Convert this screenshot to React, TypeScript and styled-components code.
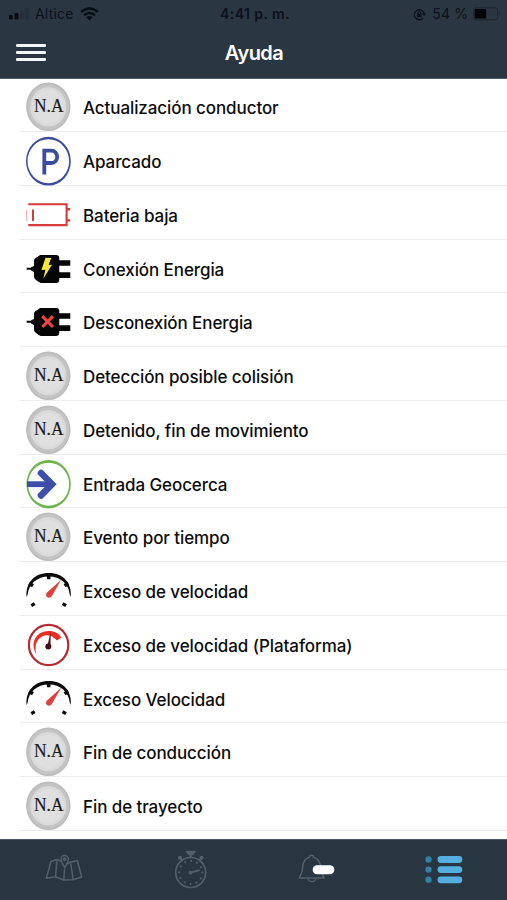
import React from "react";
import styled, { createGlobalStyle } from "styled-components";

const Global = createGlobalStyle`
  * { box-sizing: border-box; }
  body { margin: 0; background: #fff; }
`;

const Screen = styled.div`
  width: 507px;
  height: 900px;
  display: flex;
  flex-direction: column;
  overflow: hidden;
  background: #fff;
  color: #0c0c0c;
  font-family: Inter, "Liberation Sans", sans-serif;
`;

const Header = styled.header`
  flex: 0 0 79px;
  background: #2a3642;
  border-bottom: 1px solid #53606b;
`;

const StatusBar = styled.div`
  height: 27px;
  padding: 1px 6px 0 9px;
  display: grid;
  grid-template-columns: 1fr auto 1fr;
  align-items: center;
  font-size: 14px;
  line-height: 26px;
  color: #0b121b;
`;

const StatusGroup = styled.div<{ $end?: boolean }>`
  display: flex;
  align-items: center;
  justify-content: ${(p) => (p.$end ? "flex-end" : "flex-start")};
`;

const Carrier = styled.span`
  margin: 0 6px 0 5px;
  letter-spacing: 0.2px;
`;

const Clock = styled.span`
  font-weight: 600;
  letter-spacing: 0.45px;
`;

const Percent = styled.span`
  margin: 0 5px 0 6px;
  letter-spacing: 0.1px;
`;

const NavBar = styled.div`
  height: 51px;
  padding: 0 16px;
  display: grid;
  grid-template-columns: 30px 1fr 30px;
  align-items: center;
`;

const MenuButton = styled.button`
  display: flex;
  flex-direction: column;
  gap: 4.5px;
  width: 30px;
  padding: 0;
  border: 0;
  background: none;
`;

const MenuLine = styled.span`
  height: 2.8px;
  border-radius: 1px;
  background: #f4f7f9;
`;

const Title = styled.h1`
  margin: 0;
  padding-left: 1px;
  text-align: center;
  font-size: 20px;
  font-weight: 600;
  letter-spacing: -0.55px;
  color: #fff;
`;

const List = styled.ul`
  flex: 1;
  margin: 0;
  padding: 0 0 0 20px;
  list-style: none;
  overflow: hidden;
`;

const Row = styled.li`
  height: 53.75px;
  display: flex;
  align-items: flex-start;
  gap: 12px;
  padding: 4px 0 0 5px;
  border-bottom: 1.5px solid #ededee;

  &:first-child {
    height: 53px;
    padding-top: 3px;
  }
`;

const RowLabel = styled.span`
  padding-top: 13px;
  font-size: 17px;
  line-height: 26px;
  font-weight: 500;
  letter-spacing: -0.085px;
  white-space: nowrap;
`;

const RowIcon = styled.svg`
  flex: 0 0 46px;
  width: 46px;
  height: 50px;
  overflow: visible;
`;

const BadgeText = styled.text`
  font-family: "Liberation Serif", serif;
  font-size: 18px;
  fill: #1b1b1b;
  stroke: #1b1b1b;
  stroke-width: 0.2px;
`;

const TabBar = styled.nav`
  flex: 0 0 61px;
  display: grid;
  grid-template-columns: repeat(4, 1fr);
  background: #283641;
  border-top: 1px solid #4b5862;
`;

const Tab = styled.a<{ $active?: boolean }>`
  display: flex;
  justify-content: center;
  color: ${(p) => (p.$active ? "#52afe0" : "#50606c")};
`;

const TabIcon = styled.svg`
  width: 60px;
  height: 60px;
  fill: none;
  stroke: currentColor;
  stroke-width: 1.5;
  stroke-linejoin: round;
  stroke-linecap: round;
`;

const NaIcon = () => (
  <RowIcon viewBox="0 0 46 50">
    <ellipse cx="23.3" cy="24.8" rx="22.2" ry="24.3" fill="#bdbdbd" />
    <ellipse cx="23.3" cy="24.8" rx="20.6" ry="22.6" fill="#c4c4c4" />
    <ellipse cx="23.3" cy="24.8" rx="18" ry="19.8" fill="#dadada" />
    <ellipse cx="23.3" cy="24.8" rx="15.5" ry="17" fill="#dfdfdf" />
    <BadgeText x="9" y="30.2" textLength="29.5" lengthAdjust="spacingAndGlyphs">N.A</BadgeText>
  </RowIcon>
);

const ParkedIcon = () => (
  <RowIcon viewBox="0 0 46 50" fill="none" stroke="#3b4c9e">
    <path
      fill="#3b4c9e"
      stroke="none"
      fillRule="evenodd"
      d="M1 25.2a22.4 24.4 0 1 0 44.8 0a22.4 24.4 0 1 0-44.8 0ZM2.5 25.2a20.8 22 0 1 1 41.6 0a20.8 22 0 1 1-41.6 0Z"
    />
    <path d="M19.3 38.5V14.6H26.5a5.5 6 0 0 1 0 12.4H19.3" strokeWidth="3.8" />
  </RowIcon>
);

const BatteryIcon = () => (
  <RowIcon viewBox="0 0 46 50" fill="none" stroke="#d73b3a">
    <path d="M3.3 14.3H41.6V35.1H3.3" strokeWidth="2.1" />
    <path d="M42 19.2h3.2M42 30.4h3.2" strokeWidth="2.4" />
    <path d="M8 19.5v11.6" strokeWidth="2" />
    <path d="M1.6 20v11" strokeWidth="1.5" stroke="#efb9b9" />
  </RowIcon>
);

const PlugIcon = ({ connected }: { connected?: boolean }) => (
  <RowIcon viewBox="0 0 46 50">
    <path
      fill="#050505"
      d="M15 11H31Q34.3 11 34.3 14.2V16.3H45.3V21.7H34.3V28.3H45.3V33.9H34.3V35.4Q34.3 38.9 31 38.9H15.5C13 36.9 9.3 35.9 9 32.4V28Q8.5 27.1 6.8 26.9L5.8 25.8H1.7V23.8H5.8L6.8 22.8Q8.5 22.6 9 21.7V16.7C9.4 13.4 13 13.2 15 11Z"
    />
    {connected ? (
      <path fill="#f8e63a" d="M20.5 13.7L26.2 14L23.6 21L27 20.8L18.3 34.7L20.4 25.7L16.4 26Z" />
    ) : (
      <path d="M17.3 19.2L28 30M28 19.2L17.3 30" stroke="#ec463d" strokeWidth="3.1" fill="none" />
    )}
  </RowIcon>
);

const EntryIcon = () => (
  <RowIcon viewBox="0 0 46 50" fill="none">
    <path
      fill="#6db44a"
      fillRule="evenodd"
      d="M1.4 25.2a22.2 24.2 0 1 0 44.4 0a22.2 24.2 0 1 0-44.4 0ZM3 25.2a20.6 21.5 0 1 1 41.2 0a20.6 21.5 0 1 1-41.2 0Z"
    />
    <path d="M2 25.2H26" stroke="#3d4fa8" strokeWidth="5.8" />
    <path d="M16 14L27 25.2L16 36.4" stroke="#3d4fa8" strokeWidth="6.6" strokeLinecap="round" />
  </RowIcon>
);

const SpeedIcon = () => (
  <RowIcon viewBox="0 0 46 50">
    <path
      fill="#0b0b0b"
      d="M1.6 31C.3 17.5 9 7.1 23.8 7.1S47 17.5 45.8 31L44.7 28.5C43.7 18 35.5 10.5 23.8 10.5S3.7 18 2.7 28.5Z"
    />
    <path d="M23.7 9v4.2M4.2 17.4l3.8 2.3M43.3 17.4l-3.8 2.3" stroke="#0b0b0b" strokeWidth="3.6" />
    <path d="M36.2 13.8L26.6 30.5Q24.4 32.8 22 31.1Q20 28.5 22 26.4Z" fill="#df423e" />
    <path d="M6.3 39.7l3.4-2M41 39.7l-3.4-2" stroke="#0b0b0b" strokeWidth="3.2" />
  </RowIcon>
);

const PlatformSpeedIcon = () => (
  <RowIcon viewBox="0 0 46 50" fill="none">
    <ellipse cx="23.6" cy="25" rx="19.7" ry="20.1" stroke="#b52b30" strokeWidth="2.2" />
    <path
      fill="#e92d22"
      d="M11.5 35C6 26 8 15 18.5 11.8C25.5 9.4 33.5 12 36.3 17.5L32 20.5C27.5 15.5 22 14 17.5 16.3C10.7 19.8 9.3 27 11.5 35Z"
    />
    <path d="M25.8 11.5L25.4 28H21.8Z" fill="#50151c" />
    <circle cx="23.3" cy="26.6" r="3" fill="#450d17" />
  </RowIcon>
);

const icons = {
  na: <NaIcon />,
  parked: <ParkedIcon />,
  battery: <BatteryIcon />,
  plugged: <PlugIcon connected />,
  unplugged: <PlugIcon />,
  entry: <EntryIcon />,
  speed: <SpeedIcon />,
  platform: <PlatformSpeedIcon />,
};

const events: { icon: keyof typeof icons; label: string }[] = [
  { icon: "na", label: "Actualización conductor" },
  { icon: "parked", label: "Aparcado" },
  { icon: "battery", label: "Bateria baja" },
  { icon: "plugged", label: "Conexión Energia" },
  { icon: "unplugged", label: "Desconexión Energia" },
  { icon: "na", label: "Detección posible colisión" },
  { icon: "na", label: "Detenido, fin de movimiento" },
  { icon: "entry", label: "Entrada Geocerca" },
  { icon: "na", label: "Evento por tiempo" },
  { icon: "speed", label: "Exceso de velocidad" },
  { icon: "platform", label: "Exceso de velocidad (Plataforma)" },
  { icon: "speed", label: "Exceso Velocidad" },
  { icon: "na", label: "Fin de conducción" },
  { icon: "na", label: "Fin de trayecto" },
];

export default function App() {
  return (
    <Screen>
      <Global />
      <Header>
        <StatusBar>
          <StatusGroup>
            <svg width="21" height="14" viewBox="0 0 21 14">
              <rect x="0" y="8" width="3.6" height="4.4" rx="1" fill="#070c12" />
              <rect x="5.6" y="6" width="3.8" height="6.4" rx="1" fill="#070c12" />
              <rect x="11" y="3.5" width="3.6" height="8.9" rx="1" fill="#23303b" />
              <rect x="16.3" y="1" width="3.6" height="11.4" rx="1" fill="#23303b" />
            </svg>
            <Carrier>Altice</Carrier>
            <svg width="19" height="14" viewBox="0 0 19 14" fill="none" stroke="#080e15" strokeWidth="2.5">
              <path d="M1 5Q9.5-2 18 5" />
              <path d="M4 8.3Q9.5 3.6 15 8.3" />
              <path d="M6.3 10.3Q9.5 7.8 12.7 10.3L9.5 13.5Z" fill="#080e15" stroke="none" />
            </svg>
          </StatusGroup>
          <Clock>4:41 p. m.</Clock>
          <StatusGroup $end>
            <svg width="13" height="13" viewBox="0 0 13 13" fill="none" stroke="#0b121b" strokeWidth="1.3">
              <path d="M10 10.2A5 5 0 1 1 11.2 5.5" />
              <path d="M9 5.5h4l-2 2.8Z" fill="#0b121b" stroke="none" />
              <rect x="4" y="5.8" width="4.6" height="3.4" fill="#0b121b" stroke="none" />
              <path d="M4.9 6V4.9a1.4 1.4 0 0 1 2.8 0V6" strokeWidth="1" />
            </svg>
            <Percent>54 %</Percent>
            <svg width="28" height="14" viewBox="0 0 28 14">
              <rect x=".7" y=".8" width="24" height="12" rx="2.5" fill="none" stroke="#1b2630" />
              <rect x="1.7" y="2" width="11.5" height="9.6" rx="1" fill="#020407" />
              <path d="M26 4.8q2 2 0 4Z" fill="#1b2630" />
            </svg>
          </StatusGroup>
        </StatusBar>
        <NavBar>
          <MenuButton aria-label="Menú">
            <MenuLine />
            <MenuLine />
            <MenuLine />
          </MenuButton>
          <Title>Ayuda</Title>
        </NavBar>
      </Header>
      <List>
        {events.map((event) => (
          <Row key={event.label}>
            {icons[event.icon]}
            <RowLabel>{event.label}</RowLabel>
          </Row>
        ))}
      </List>
      <TabBar>
        <Tab>
          <TabIcon viewBox="-1 0 60 60">
            <path d="M27 21.2L23 19.5L17 21.5L12.3 38.3L21.5 36.8L29.8 40L39 39.7L47.7 37L43.3 20.5L36.5 22.3L33.5 23.5" />
            <path d="M23 19.5L21.5 36.8M30.5 29L29.8 40M36.5 22.3L39.2 39.5" />
            <path d="M30.7 27.5C28.5 24 27 21.5 27 19.5a3.7 3.9 0 0 1 7.4 0C34.4 21.5 33 24 30.7 27.5Z" fill="#283641" />
            <circle cx="30.7" cy="19.3" r="1.2" />
          </TabIcon>
        </Tab>
        <Tab>
          <TabIcon viewBox="0 0 60 60">
            <circle cx="30.7" cy="32.5" r="15" strokeWidth="1.6" />
            <circle cx="30.7" cy="32.5" r="11.6" strokeWidth="2" strokeDasharray=".1 5.97" />
            <path d="M26.5 11.5H35L32.5 14.5H29Z" fill="currentColor" />
            <path d="M30.7 14.5V17M20.8 18.8L22.2 20.3M40.7 18.8L39.3 20.3" strokeWidth="2.2" />
            <circle cx="20" cy="17.7" r="1.3" fill="currentColor" />
            <circle cx="41.5" cy="17.7" r="1.3" fill="currentColor" />
            <path d="M30.5 32.6L39 30.4" strokeWidth="2" />
            <circle cx="30.5" cy="32.6" r="1.2" fill="currentColor" />
          </TabIcon>
        </Tab>
        <Tab>
          <TabIcon viewBox="5.5 0.5 60 60">
            <path d="M28 17.8A2 2 0 0 1 32 17.8C37 19 39 23 39 28.5C39 33 40.8 34 42.6 38.5H17.8C18.5 35.5 21 34 21 29C21 23 23 19 28 17.8Z" />
            <path d="M26.8 40.2A3.8 3 0 0 0 34 40.2" />
            <rect x="31.2" y="25.8" width="21.6" height="9" rx="4.2" fill="#fff" stroke="none" />
          </TabIcon>
        </Tab>
        <Tab $active>
          <TabIcon viewBox="7.7 0.8 60 60">
            <path d="M38 20.3H56M38 30.4H56M38 40.6H56" strokeWidth="6.8" transform="translate(-3.4 0)" />
            <g fill="#347fa5" stroke="none">
              <circle cx="22.2" cy="20.3" r="3.2" />
              <circle cx="22.2" cy="30.4" r="3.2" />
              <circle cx="22.2" cy="40.6" r="3.2" />
            </g>
          </TabIcon>
        </Tab>
      </TabBar>
    </Screen>
  );
}
